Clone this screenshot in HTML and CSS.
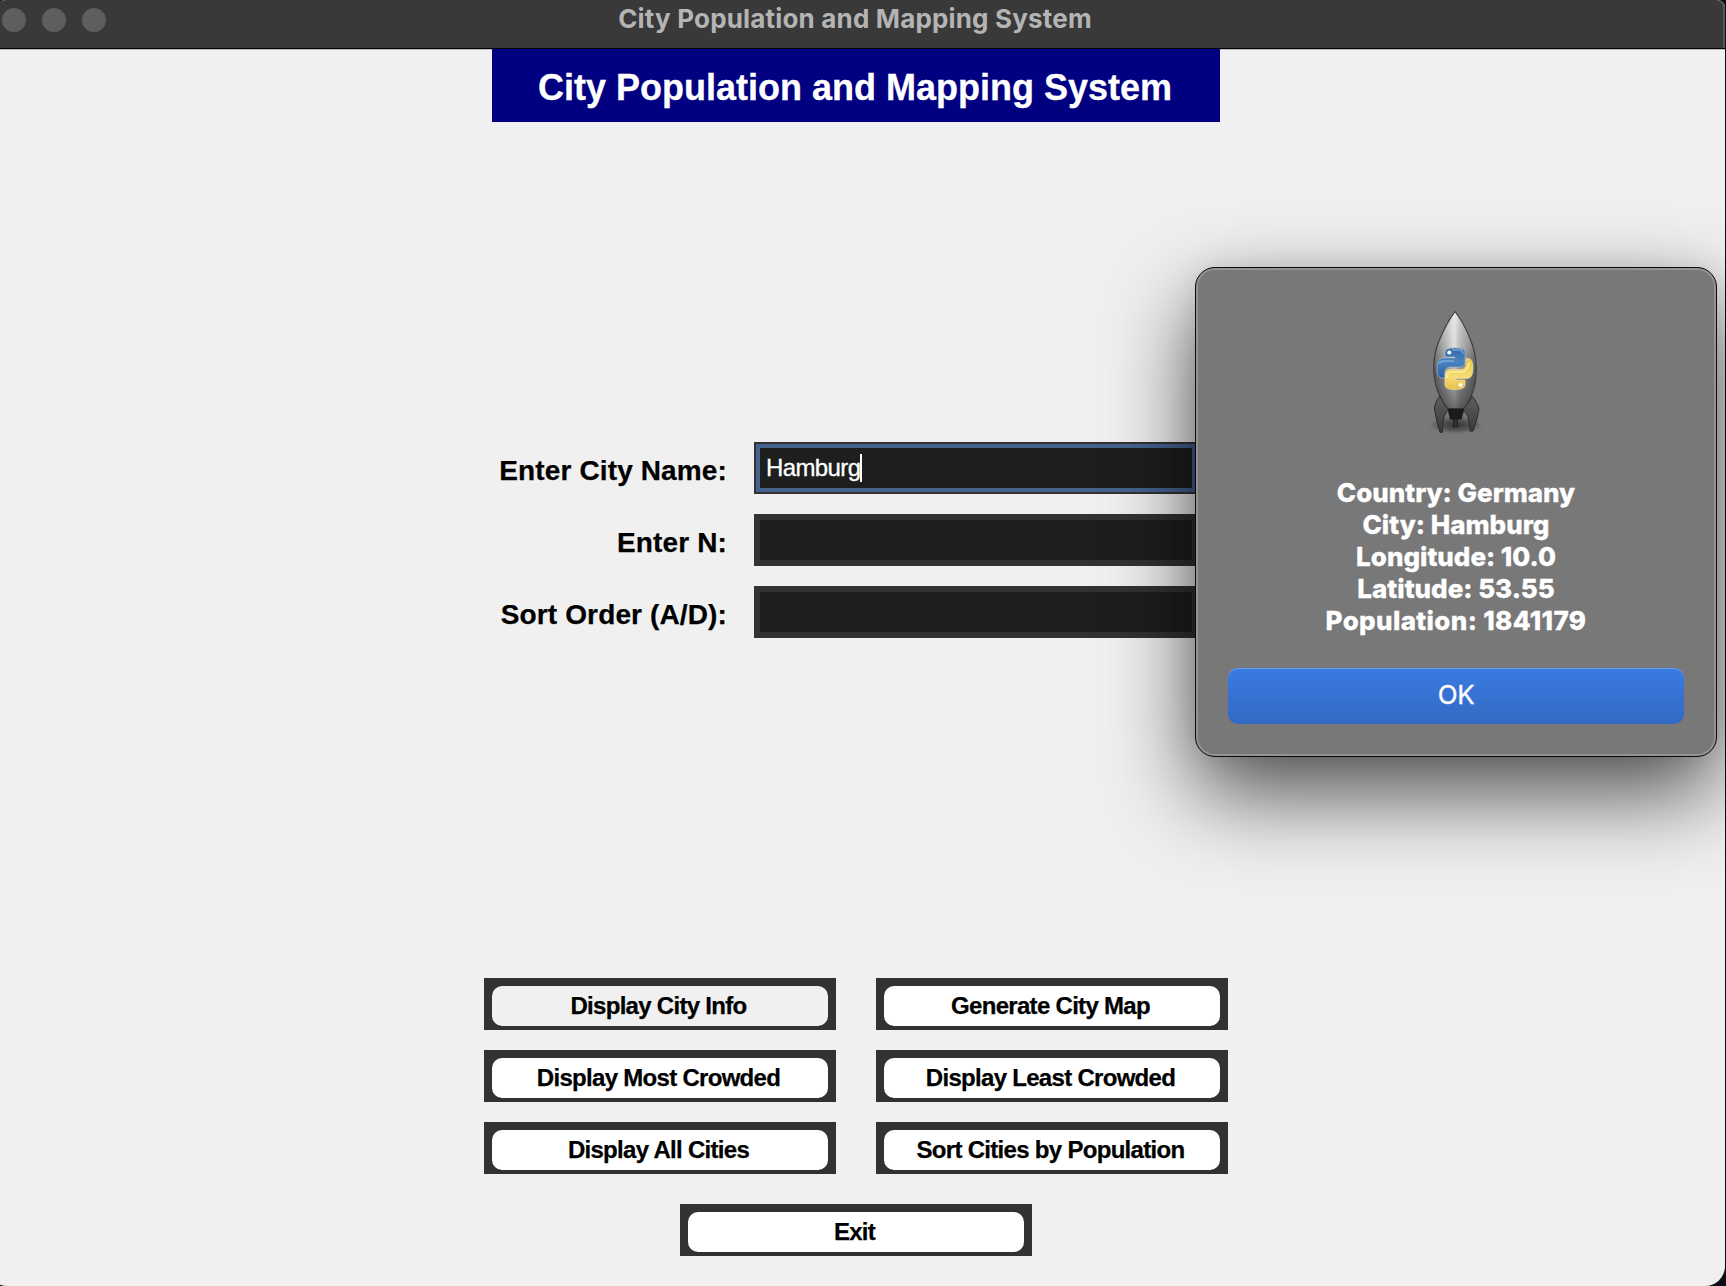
FILE: index.html
```html
<!DOCTYPE html>
<html lang="en">
<head>
<meta charset="utf-8">
<title>City Population and Mapping System</title>
<link rel="stylesheet" href="styles.css">
</head>
<body>
<main class="window">
  <header class="titlebar">
    <div class="lights"><span class="light"></span><span class="light"></span><span class="light"></span></div>
    <div class="window-title"><span>City Population and Mapping System</span></div>
  </header>
  <div class="content">
    <h1 class="banner"><span>City Population and Mapping System</span></h1>
    <form class="form">
      <label class="label label-city">Enter City Name:</label>
      <div class="entry focused"><span class="value">Hamburg</span><span class="caret"></span></div>
      <label class="label label-n">Enter N:</label>
      <div class="entry"></div>
      <label class="label label-sort">Sort Order (A/D):</label>
      <div class="entry"></div>
    </form>
    <div class="actions">
      <div class="frame"><button class="btn pressed">Display City Info</button></div>
      <div class="frame"><button class="btn">Generate City Map</button></div>
      <div class="frame"><button class="btn">Display Most Crowded</button></div>
      <div class="frame"><button class="btn">Display Least Crowded</button></div>
      <div class="frame"><button class="btn">Display All Cities</button></div>
      <div class="frame"><button class="btn">Sort Cities by Population</button></div>
    </div>
    <div class="frame exit"><button class="btn">Exit</button></div>
  </div>
</main>
<section class="dialog" role="alertdialog">
  <svg class="rocket" width="120" height="160" viewBox="0 0 120 160">
    <defs>
      <linearGradient id="body" x1="0" x2="1" y1="0" y2="0">
        <stop offset="0" stop-color="#5c5c5c"/><stop offset=".2" stop-color="#8e8e8e"/><stop offset=".48" stop-color="#d8d8d8"/><stop offset=".62" stop-color="#a5a5a5"/><stop offset="1" stop-color="#5a5a5a"/>
      </linearGradient>
      <linearGradient id="shade" x1="0" x2="0" y1="0" y2="1">
        <stop offset="0" stop-color="#fff" stop-opacity=".45"/><stop offset=".35" stop-color="#fff" stop-opacity=".2"/><stop offset=".6" stop-color="#444" stop-opacity=".22"/><stop offset="1" stop-color="#222" stop-opacity=".6"/>
      </linearGradient>
      <linearGradient id="blue" x1="0" x2="0" y1="0" y2="1">
        <stop offset="0" stop-color="#2f68a8"/><stop offset=".45" stop-color="#4a84c0"/><stop offset="1" stop-color="#2c5f9e"/>
      </linearGradient>
      <linearGradient id="yellow" x1="0" x2="0" y1="0" y2="1">
        <stop offset="0" stop-color="#ecc84a"/><stop offset=".6" stop-color="#f7dc72"/><stop offset="1" stop-color="#e8bd4a"/>
      </linearGradient>
      <linearGradient id="fin" x1="0" x2="0" y1="0" y2="1">
        <stop offset="0" stop-color="#5e5e5e"/><stop offset="1" stop-color="#3a3a3a"/>
      </linearGradient>
      <radialGradient id="ground"><stop offset="0" stop-color="#222" stop-opacity=".8"/><stop offset=".6" stop-color="#333" stop-opacity=".5"/><stop offset="1" stop-color="#444" stop-opacity="0"/></radialGradient>
    </defs>
    <ellipse cx="56" cy="135" rx="27" ry="9" fill="url(#ground)"/>
    <path d="M55 21.500Q64 33 71 51C77 66 77.500 84 74 98Q71 109 65 119H47Q41 111 37 99C32 83 33 65 39 51Q46 34 55 21.500Z" fill="url(#body)"/>
    <path d="M55 21.500Q64 33 71 51C77 66 77.500 84 74 98Q71 109 65 119H47Q41 111 37 99C32 83 33 65 39 51Q46 34 55 21.500Z" fill="url(#shade)" stroke="#3e3e3e" stroke-width="1.200"/>
    <path d="M40 106Q34 114 34.500 119Q36 130 40 142.300H42.500Q42.500 122 49 120Q43 114 40 106ZM72 106Q78 114 79 119Q77 131 73 141H70Q69.500 122 62 120Q69 114 72 106Z" fill="url(#fin)" stroke="#2b2b2b" stroke-width="1"/>
    <path d="M47.500 118.500H64.500L61.500 129.500H50Z" fill="#1b1b1b"/>
    <path d="M53.500 129H57.500V137H53.500Z" fill="#303030" stroke="#1c1c1c" stroke-width=".8"/>
    <path d="M45 67V62Q45 58 55 58Q65 58 65 62V72Q65 77 60 77H50Q45 77 45 83V88H42Q37 88 37 78Q37 68 43 68H55V67Z" fill="url(#blue)" stroke="#a9b9cc" stroke-opacity=".65" stroke-width="1"/>
    <path d="M65 90V95Q65 99.500 55 99.500Q45 99.500 45 95V85Q45 79.500 50 79.500H60Q66 79.500 66 74V68.500H68Q73 68.500 73 78Q73 88.500 67 88.500H55V90Z" fill="url(#yellow)" stroke="#e9dfb2" stroke-opacity=".65" stroke-width="1"/>
    <path d="M52 60H61Q63 61 63 64M39.500 74Q40 71 44 71H54" fill="none" stroke="#a6c8e8" stroke-opacity=".6" stroke-width="1.500"/>
    <path d="M47 88Q47 82 51 82H61Q68 81 69 73" fill="none" stroke="#fff3b0" stroke-opacity=".8" stroke-width="1.500"/>
    <circle cx="49.300" cy="62.500" r="2" fill="#fff"/><circle cx="60.500" cy="95" r="2" fill="#fff"/>
  </svg>
  <div class="message">
    <p class="line">Country: Germany</p>
    <p class="line">City: Hamburg</p>
    <p class="line">Longitude: 10.0</p>
    <p class="line">Latitude: 53.55</p>
    <p class="line wide">Population: 1841179</p>
  </div>
  <button class="ok">OK</button>
</section>
</body>
</html>
```
FILE: styles.css
```css
* { box-sizing: border-box; }

body {
  margin: 0;
  width: 1726px;
  height: 1286px;
  overflow: hidden;
  background: #0b0e16;
  font-family: "Liberation Sans", Arial, sans-serif;
}

button { border: 0; padding: 0; margin: 0; font-family: inherit; }

/* The window starts slightly beyond the left edge of the screen. */
.window {
  width: 1738px;
  height: 1286px;
  margin-left: -13px;
  border-radius: 20px 8px 20px 20px;
  overflow: hidden;
  background: #f0f0f0;
  display: flex;
  flex-direction: column;
}

.titlebar {
  height: 49px;
  flex: none;
  display: grid;
  grid-template-columns: 200px 1fr 200px;
  background: #393939;
  border-bottom: 1px solid #000;
  border-top-right-radius: 8px;
  box-shadow: inset -2px 0 0 #565656, 0 1px 0 #bcbcbc;
}

.lights { display: flex; gap: 16px; padding: 8px 0 0 15px; }
.light { width: 24px; height: 24px; border-radius: 50%; background: #5e5e5e; }

.window-title {
  padding-right: 2px;
  text-align: center;
  font: 700 26px/38px Inter, sans-serif;
  letter-spacing: 0.17px;
  color: #b4b4b4;
  white-space: nowrap;
}

.content { flex: 1; display: flex; flex-direction: column; align-items: center; }

.banner {
  margin: 0;
  width: 728px;
  height: 73px;
  padding: 2px 2px 0 0;
  position: relative;
  background: #000080;
  color: #fff;
  font-size: 36px;
  font-weight: 700;
  line-height: 73px;
  text-align: center;
  white-space: nowrap;
  -webkit-text-stroke: 0.3px #fff;
}

.form {
  width: 744px;
  margin-top: 320px;
  display: grid;
  grid-template-columns: 242px 444px;
  column-gap: 28px;
  row-gap: 20px;
}

.label {
  height: 52px;
  padding-top: 3px;
  margin-right: -1px;
  font-size: 28px;
  font-weight: 700;
  line-height: 52px;
  letter-spacing: 0.13px;
  text-align: right;
  white-space: nowrap;
  color: #000;
  -webkit-text-stroke: 0.25px #000;
}

.entry {
  height: 52px;
  display: flex;
  align-items: center;
  padding-left: 6px;
  background: #1e1e1e;
  border: 6px solid #323232;
  color: #fff;
  font-size: 24px;
}

.entry.focused {
  border-width: 2px;
  padding-left: 10px;
  box-shadow: inset 0 0 0 4px #44638f;
}

.value { letter-spacing: -0.62px; line-height: 52px; -webkit-text-stroke: 0.3px #fff; }
.caret { width: 2px; height: 28px; background: #fff; }

.actions {
  margin-top: 340px;
  display: grid;
  grid-template-columns: 352px 352px;
  column-gap: 40px;
  row-gap: 20px;
}

.frame { width: 352px; height: 52px; padding: 8px 8px 4px; background: #323232; }
.exit { margin-top: 30px; }

.btn {
  display: block;
  width: 336px;
  height: 40px;
  padding-right: 3px;
  border-radius: 10px;
  background: #fff;
  color: #000;
  font-size: 24px;
  font-weight: 700;
  line-height: 40px;
  letter-spacing: -0.7px;
  text-align: center;
  white-space: nowrap;
  -webkit-text-stroke: 0.25px #000;
}

.btn.pressed { background: #f0f0f0; }

.dialog {
  position: absolute;
  left: 1195px;
  top: 267px;
  width: 522px;
  height: 490px;
  border: 1px solid #0a0a0a;
  border-radius: 20px;
  background: #787878;
  box-shadow: inset 0 0 0 2px #939393, 0 36px 88px rgba(0, 0, 0, .68), 0 0 30px rgba(0, 0, 0, .08);
  display: flex;
  flex-direction: column;
  align-items: center;
  font-family: Inter, sans-serif;
  color: #fff;
}

.rocket { margin: 22px 0 0 8px; flex: none; }

.message { margin-top: 27px; }
.line {
  margin: 0;
  font-size: 26px;
  font-weight: 800;
  line-height: 32px;
  text-align: center;
  white-space: nowrap;
  -webkit-text-stroke: 0.3px #fff;
}
.line.wide { letter-spacing: 0.36px; }

.ok {
  width: 456px;
  height: 56px;
  margin-top: 31px;
  padding-bottom: 2px;
  border-radius: 10px;
  background: linear-gradient(#3a7be2, #3269c3);
  box-shadow: inset 0 1px 0 #6a9ee8;
  color: #fff;
  font-size: 26px;
  line-height: 54px;
  letter-spacing: -0.3px;
  -webkit-text-stroke: 0.3px #fff;
}
```
